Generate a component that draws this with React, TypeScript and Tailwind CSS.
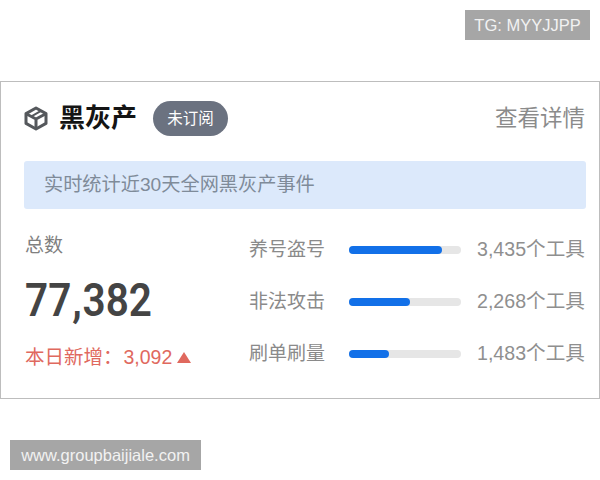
const font = { fontFamily: '"Liberation Sans", "Noto Sans CJK SC", sans-serif' };

const rows = [
  { name: "养号盗号", value: "3,435个工具", fill: "w-[93px]" },
  { name: "非法攻击", value: "2,268个工具", fill: "w-[61px]" },
  { name: "刷单刷量", value: "1,483个工具", fill: "w-[40px]" },
];

function BoxIcon() {
  return (
    <svg width="24" height="25" viewBox="0 0 24 25" fill="none" stroke="#55585c" strokeWidth="3" strokeLinejoin="round">
      <path d="M12 2 22 7.6V17.4L12 23 2 17.4V7.6Z" />
      <path d="M2.6 8 12 13 21.4 8M12 13V22.4" />
      <path d="M7.4 10.4 16.6 5.2" strokeWidth="2" />
    </svg>
  );
}

export default function App() {
  return (
    <div className="w-[600px] h-[480px] bg-white flex flex-col overflow-hidden" style={font}>
      <div className="self-end mt-[10px] mr-[10px] w-[125px] h-[30px] bg-[#a6a6a6] text-[#f2f2f2] text-[16.5px] flex items-center justify-center">
        TG: MYYJJPP
      </div>

      <div className="mt-[41px] h-[318px] border border-[#bdbdbd] pl-[23px] pr-[13px] flex flex-col">
        <div className="h-[79px] pb-[6px] flex items-center">
          <BoxIcon />
          <span className="ml-[11px] text-[26px] font-bold text-[#141414]">黑灰产</span>
          <span className="ml-[16px] w-[75px] h-[35px] rounded-full bg-[#6b7280] text-white text-[15.5px] flex items-center justify-center">
            未订阅
          </span>
          <span className="ml-auto mr-px text-[22.5px] text-[#8b8b8b]">查看详情</span>
        </div>

        <div className="h-[48px] rounded-[3px] bg-[#dce9fb] pl-[20px] flex items-center text-[19.2px] text-[#7f8b99]">
          实时统计近30天全网黑灰产事件
        </div>

        <div className="flex mt-[23px]">
          <div className="w-[225px] pl-px">
            <div className="text-[19px] leading-[28px] text-[#808080]">总数</div>
            <div
              className="mt-[17px] w-max origin-left scale-x-[0.88] text-[46px] leading-[46px] font-semibold text-[#444444]"
              style={{ fontFamily: "Roboto, sans-serif" }}
            >
              77<span className="mx-[1px]">,</span>382
            </div>
            <div className="mt-[20px] flex items-center text-[19.5px] leading-[28px] text-[#e0695e]">
              <span>本日新增：</span>
              <span className="ml-[1px]">3,092</span>
              <span className="ml-[5px] w-0 h-0 border-x-[7px] border-x-transparent border-b-[11px] border-b-[#e0695e]" />
            </div>
          </div>

          <div className="flex-1 flex flex-col gap-[24px] pt-[4px]">
            {rows.map((row) => (
              <div key={row.name} className="h-[28px] flex items-center">
                <span className="w-[100px] text-[19px] text-[#8a8a8a]">{row.name}</span>
                <div className="w-[112px] h-[8px] rounded-full bg-[#e6e6e6]">
                  <div className={`${row.fill} h-full rounded-full bg-[#1270e8]`} />
                </div>
                <span className="ml-[16px] text-[19.6px] whitespace-nowrap text-[#8f8f8f]">{row.value}</span>
              </div>
            ))}
          </div>
        </div>
      </div>

      <div className="mt-[41px] ml-[10px] w-[191px] h-[30px] bg-[#a6a6a6] text-[#f2f2f2] text-[16.5px] flex items-center justify-center">
        www.groupbaijiale.com
      </div>
    </div>
  );
}
